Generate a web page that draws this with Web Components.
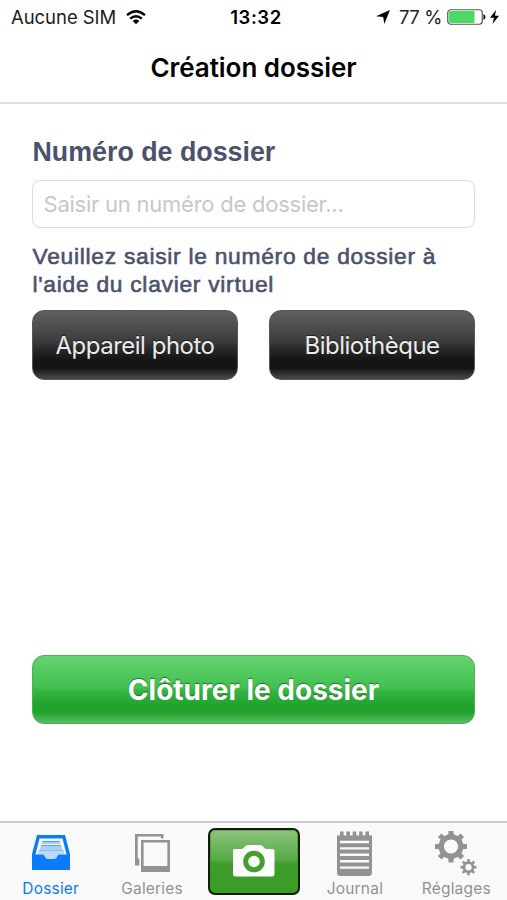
<!DOCTYPE html>
<html lang="fr">
<head>
<meta charset="utf-8">
<meta name="viewport" content="width=device-width, initial-scale=1">
<title>Création dossier</title>
<style>
  html, body {
    margin: 0;
    height: 100%;
    background: #fff;
    overflow: hidden;
  }
</style>
</head>
<body>
<dossier-app></dossier-app>

<script>
const define = (name, html, setup) => {
  const template = document.createElement("template");
  template.innerHTML = html;

  customElements.define(name, class extends HTMLElement {
    constructor() {
      super();
      this.attachShadow({ mode: "open" });
      this.shadowRoot.append(template.content.cloneNode(true));
    }

    connectedCallback() {
      setup?.(this, this.shadowRoot);
    }
  });
};

// Toothed wheel with a round hole, drawn with the even-odd rule
function gearPath(cx, cy, outer, inner, hole, teeth = 8) {
  const step = (Math.PI * 2) / teeth;
  const points = [];

  for (let i = 0; i < teeth; i++) {
    const a = i * step - Math.PI / 2;
    for (const [offset, r] of [[-0.26, inner], [-0.2, outer], [0.2, outer], [0.26, inner]]) {
      const t = a + offset * step;
      points.push(`${(cx + Math.cos(t) * r).toFixed(2)} ${(cy + Math.sin(t) * r).toFixed(2)}`);
    }
  }

  return `M${points.join("L")}Z M${cx - hole} ${cy}a${hole} ${hole} 0 1 0 ${hole * 2} 0a${hole} ${hole} 0 1 0 ${-hole * 2} 0Z`;
}

const icons = {
  dossier: `
    <path fill="currentColor" fill-rule="evenodd" d="M6 0H34L39 19V35H1V19ZM8.500 3.500L4.500 19.500H12Q13 19.500 13.600 21Q14.500 24 16.500 24H23.500Q25.500 24 26.400 21Q27 19.500 28 19.500H35.500L31.500 3.500Z"/>
    <path fill="currentColor" opacity=".25" d="M7.500 15H32.500L33.500 19.500H28Q27 19.500 26.400 21Q25.500 24 23.500 24H16.500Q14.500 24 13.600 21Q13 19.500 12 19.500H6.500Z"/>
    <path fill="currentColor" opacity=".35" d="M11.500 6H28.500L29.500 9H10.500ZM10 10.500H30L31 14H9Z"/>
    <path stroke="currentColor" stroke-width="1.200" opacity=".6" d="M11.500 6.500H28.500M10 10.500H30M8.500 15H31.500"/>`,
  galeries: `
    <path fill="currentColor" d="M0 0H28.500V4.500H26V2.600H2.700V24.500H4.300V31.500H0Z"/>
    <path fill="currentColor" fill-rule="evenodd" d="M6 6H35V38H6ZM8.600 8.600V32H32.400V8.600Z"/>`,
  journal: `
    <path fill="currentColor" fill-rule="evenodd" d="M2 4.500H37V41.500Q37 45 33.500 45H5.500Q2 45 2 41.500ZM5 9.800V12.200H34V9.800ZM5 16.200V18.600H34V16.200ZM5 22.600V25H34V22.600ZM5 29V31.400H34V29ZM5 35.400V37.800H34V35.400Z"/>
    <path stroke="currentColor" stroke-width="3.600" d="M6.800 .500V7M13.200 .500V7M19.500 .500V7M25.900 .500V7M32.200 .500V7"/>`,
  reglages: `
    <path fill="currentColor" fill-rule="evenodd" d="${gearPath(16, 15.5, 16.2, 12.6, 7.1)}"/>
    <path fill="currentColor" fill-rule="evenodd" d="${gearPath(33.5, 36.2, 8.2, 6, 3.2)}"/>`
};

const iconBoxes = {
  dossier: [40, 36],
  galeries: [35, 38],
  journal: [39, 45],
  reglages: [42, 45]
};

define("status-bar", `
  <style>
    :host {
      display: grid;
      grid-template-columns: 1fr auto 1fr;
      align-items: center;
      box-sizing: border-box;
      height: 34px;
      padding: 0 8px 0 11px;
      font-size: 18.5px;
      color: #1c1c1c;
    }
    div { display: flex; align-items: center; }
    .time { padding-left: 2px; font-weight: 600; letter-spacing: .55px; color: #000; }
    .right { justify-content: flex-end; }
    svg { display: block; }
    .wifi { margin-left: 10px; }
    .arrow { margin-right: 9px; }
    .battery { margin-left: 5px; }
    .bolt { margin-left: 4px; }
    .carrier { letter-spacing: -.05px; }
    .level { letter-spacing: -.4px; }
  </style>
  <div>
    <span class="carrier">Aucune SIM</span>
    <svg class="wifi" width="20" height="15" viewBox="0 0 20 15" fill="none" stroke="#000" stroke-width="2.300">
      <path d="M1 5.200Q10-2.600 19 5.200M4.200 8.700Q10 3.800 15.800 8.700"/>
      <path fill="#000" stroke="none" d="M6.700 10.900Q10 8.300 13.300 10.900L10 14.300Z"/>
    </svg>
  </div>
  <span class="time">13:32</span>
  <div class="right">
    <svg class="arrow" width="14" height="14" viewBox="0 0 14 14"><path d="M14 0L8.300 14L7.200 7L0 6.300Z"/></svg>
    <span class="level">77 %</span>
    <svg class="battery" width="39" height="16" viewBox="0 0 39 16">
      <rect x=".75" y=".75" width="34.500" height="14.500" rx="3" fill="#fff" stroke="#555" stroke-width="1.200"/>
      <path fill="#4cd964" d="M3.500 2H27.500V14H3.500Q2 14 2 12.500V3.500Q2 2 3.500 2Z"/>
      <path d="M36.500 5Q38.500 6 38.500 8T36.500 11Z"/>
    </svg>
    <svg class="bolt" width="9" height="14" viewBox="0 0 9 14"><path d="M6 0L0 7.700H4L2.500 14L9 5.700H5Z"/></svg>
  </div>
`);

define("nav-title", `
  <style>
    :host {
      display: flex;
      align-items: center;
      justify-content: center;
      box-sizing: border-box;
      height: 70px;
      padding-bottom: 1px;
      border-bottom: 2px solid #e0e0e0;
      font-size: 26px;
      font-weight: 600;
      letter-spacing: -.05px;
      color: #000;
    }
  </style>
  <slot></slot>
`);

define("text-field", `
  <style>
    :host { display: block; }
    input {
      display: block;
      box-sizing: border-box;
      width: 100%;
      height: 48px;
      padding: 0 10.500px;
      border: 1.500px solid #dcdcdc;
      border-radius: 8px;
      outline: 0;
      background: #fff;
      font: inherit;
      font-size: 22px;
      letter-spacing: -.24px;
    }
    input::placeholder { color: #c7c7cb; opacity: 1; }
  </style>
  <input type="text">
`, (host, root) => {
  root.querySelector("input").placeholder = host.getAttribute("placeholder") || "";
});

define("gloss-button", `
  <style>
    :host { display: block; }
    button {
      display: block;
      box-sizing: border-box;
      width: 100%;
      height: 70px;
      padding: 1px 0 0;
      border: 1px solid #555;
      border-radius: 12px;
      background: linear-gradient(#606060, #3a3a3a 47%, #2c2c2c 53%, #151515 72%, #141414 84%, #444 98%);
      color: #ebebeb;
      font: inherit;
      font-size: 24px;
      letter-spacing: -.5px;
      text-shadow: 0 -1px 0 rgba(0, 0, 0, .5);
    }
    :host([kind="success"]) button {
      height: 69px;
      border-color: #55ad5a;
      background: linear-gradient(#66d370, #41c050 47%, #34b441 53%, #1fa12b 76%, #21a32d 84%, #54bb5c 98%);
      color: #fff;
      font-size: 28px;
      font-weight: 700;
      letter-spacing: 0;
      text-shadow: 0 -1px 1px rgba(0, 60, 0, .6);
    }
  </style>
  <button type="button"><slot></slot></button>
`);

define("dossier-form", `
  <style>
    :host {
      display: flex;
      flex-direction: column;
      flex: 1;
      padding: 32px 32px 0;
    }
    h2, p {
      margin: 0;
      font-family: "Liberation Sans", Arial, sans-serif;
      color: #4b526d;
    }
    h2 { padding-left: .5px; font-size: 26.800px; line-height: 32px; }
    p {
      margin-top: 14px;
      padding-left: .5px;
      font-size: 22.800px;
      line-height: 28px;
      letter-spacing: .72px;
      -webkit-text-stroke: .6px currentColor;
    }
    text-field { margin-top: 12px; }
    .sources {
      display: grid;
      grid-template-columns: 1fr 1fr;
      gap: 31px;
      margin-top: 12px;
    }
    .close { margin: auto 0 98px; }
  </style>
  <h2>Numéro de dossier</h2>
  <text-field placeholder="Saisir un numéro de dossier..."></text-field>
  <p>Veuillez saisir le numéro de dossier à<br>l'aide du clavier virtuel</p>
  <div class="sources">
    <gloss-button>Appareil photo</gloss-button>
    <gloss-button>Bibliothèque</gloss-button>
  </div>
  <gloss-button class="close" kind="success">Clôturer le dossier</gloss-button>
`);

define("tab-item", `
  <style>
    :host {
      display: flex;
      flex-direction: column;
      align-items: center;
      color: #929292;
      font-size: 15.5px;
      letter-spacing: .2px;
    }
    :host([active]) { color: #0b7bfb; }
    .icon {
      display: flex;
      align-items: center;
      justify-content: center;
      height: 48px;
      margin-top: 6px;
    }
    svg { display: block; }
    span { line-height: 20px; margin-top: 2px; }
  </style>
  <div class="icon"></div>
  <span><slot></slot></span>
`, (host, root) => {
  const name = host.getAttribute("icon");
  const [w, h] = iconBoxes[name];
  root.querySelector(".icon").innerHTML =
    `<svg width="${w}" height="${h}" viewBox="0 0 ${w} ${h}" aria-hidden="true">${icons[name]}</svg>`;
});

define("camera-button", `
  <style>
    :host { display: flex; justify-content: center; padding: 5px 0 0 1px; }
    button {
      display: flex;
      align-items: center;
      justify-content: center;
      box-sizing: border-box;
      width: 92px;
      height: 67px;
      padding: 0 0 1px;
      border: 2px solid #111c0d;
      border-radius: 7px;
      background: linear-gradient(#8dc57e, #56a946 47%, #3f9d2c 54%, #399c24);
      box-shadow: inset 0 0 0 1px rgba(60, 150, 40, .6);
    }
  </style>
  <button type="button" aria-label="Photo">
    <svg width="42" height="32" viewBox="0 0 42 32">
      <path fill="#fff" d="M2 4H8Q10 4 11 2.500Q12.500 0 15 0H27Q29.500 0 31 2.500Q32 4 34 4H39.500Q41.500 4 41.500 6V29Q41.500 31.500 39 31.500H2.500Q0 31.500 0 29V6Q0 4 2 4Z"/>
      <circle cx="21" cy="16.500" r="8.300" fill="#fff" stroke="#43a030" stroke-width="5"/>
    </svg>
  </button>
`);

define("tab-bar", `
  <style>
    :host {
      display: grid;
      grid-template-columns: repeat(5, 1fr);
      box-sizing: border-box;
      height: 79px;
      border-top: 2px solid #cbcbcb;
      background: #f9f9f9;
    }
  </style>
  <slot></slot>
`);

define("dossier-app", `
  <style>
    :host {
      display: flex;
      flex-direction: column;
      height: 100vh;
      background: #fff;
      font-family: Inter, "Liberation Sans", sans-serif;
    }
    .form { margin-bottom: -1px; }
  </style>
  <status-bar></status-bar>
  <nav-title>Création dossier</nav-title>
  <dossier-form class="form"></dossier-form>
  <tab-bar>
    <tab-item icon="dossier" active>Dossier</tab-item>
    <tab-item icon="galeries">Galeries</tab-item>
    <camera-button></camera-button>
    <tab-item icon="journal">Journal</tab-item>
    <tab-item icon="reglages">Réglages</tab-item>
  </tab-bar>
`);
</script>
</body>
</html>
